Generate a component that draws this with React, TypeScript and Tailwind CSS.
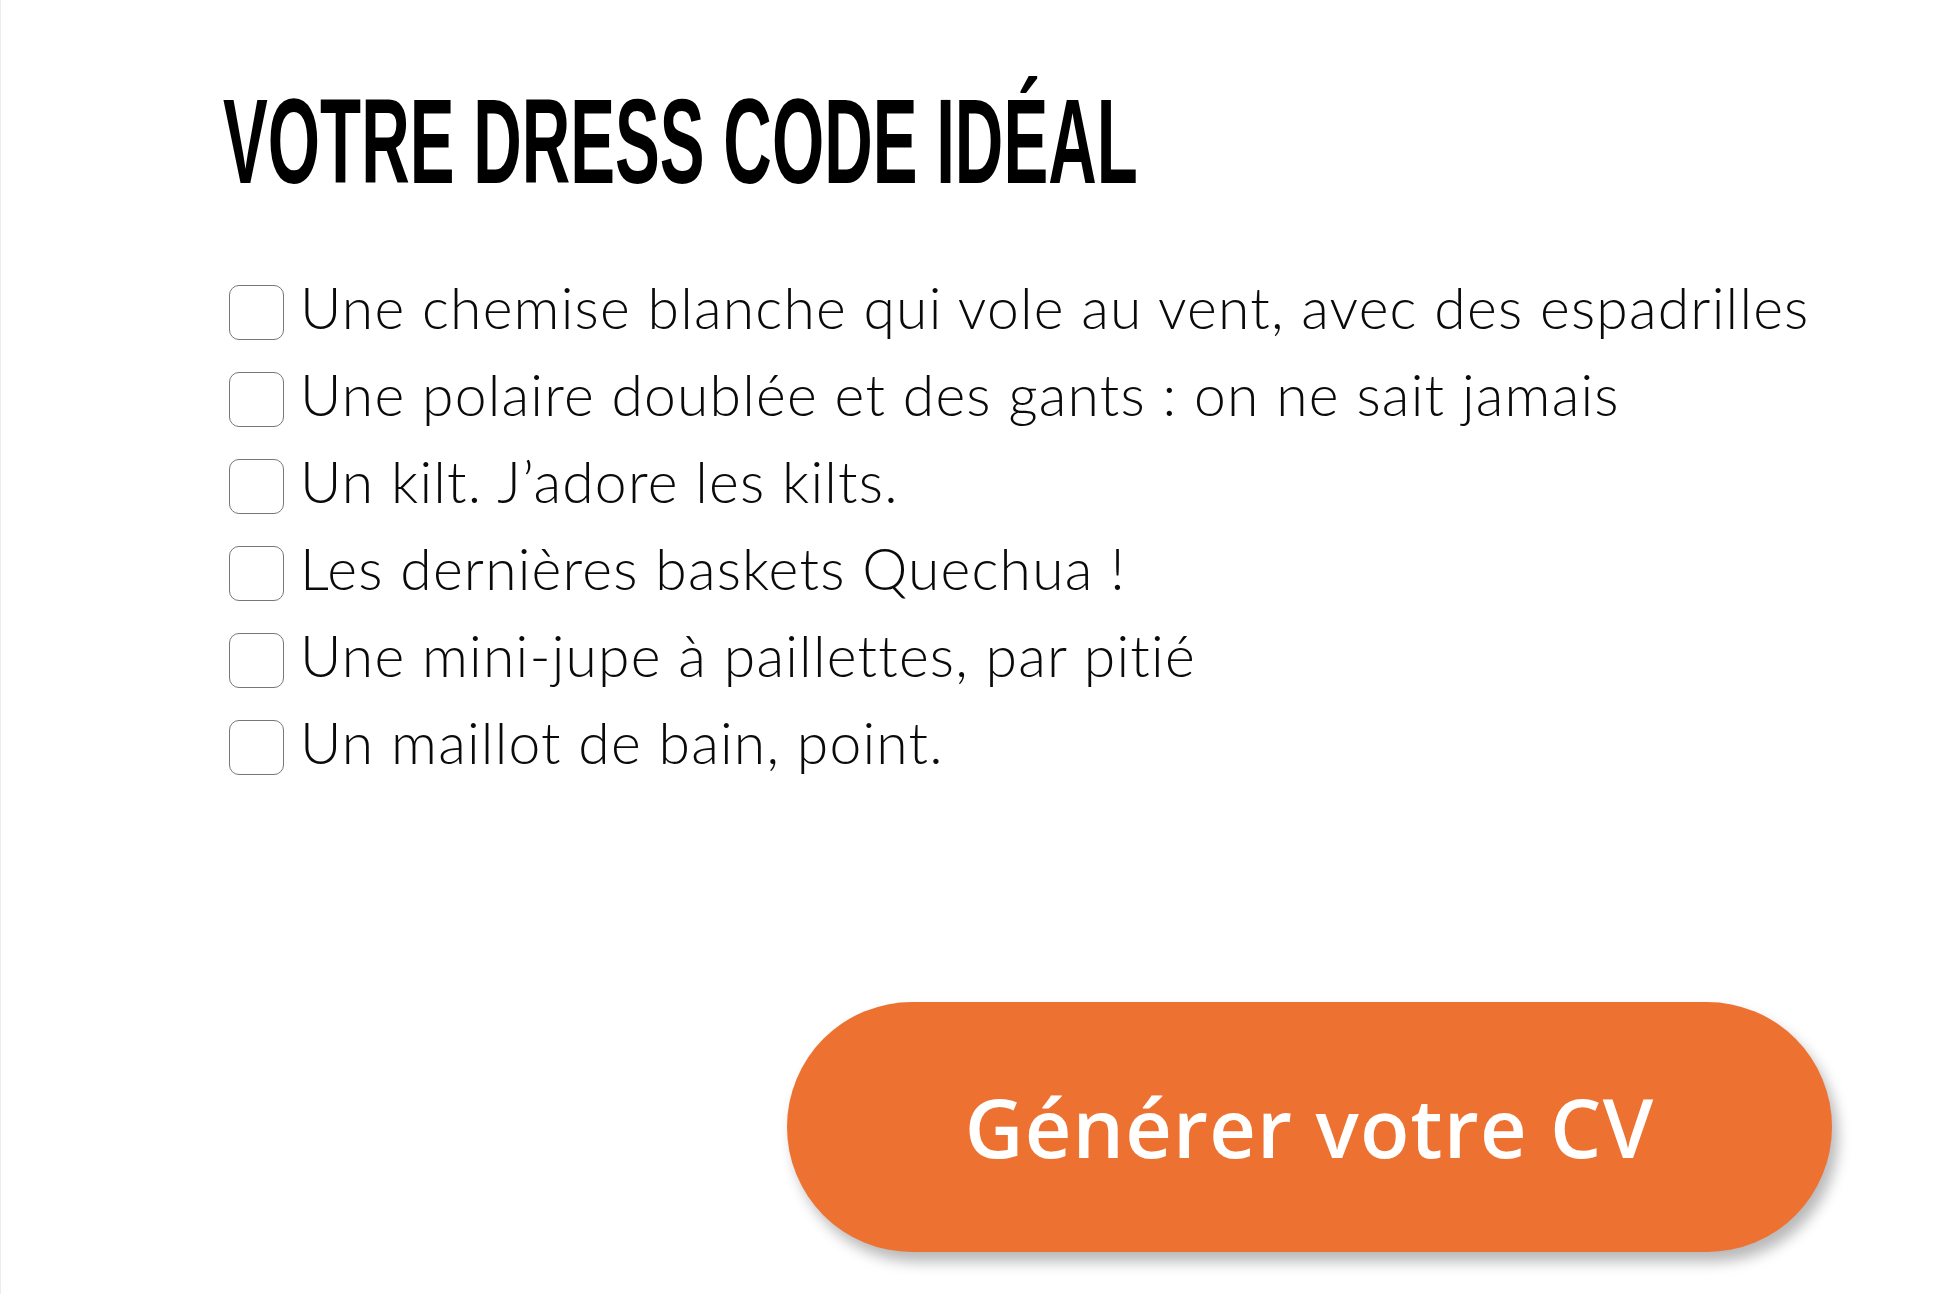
import React from 'react';

const options = [
  'Une chemise blanche qui vole au vent, avec des espadrilles',
  'Une polaire doublée et des gants : on ne sait jamais',
  'Un kilt. J’adore les kilts.',
  'Les dernières baskets Quechua !',
  'Une mini-jupe à paillettes, par pitié',
  'Un maillot de bain, point.',
];

export default function App() {
  return (
    <div className="min-h-screen bg-white border-l border-[#ececec]">
      <div className="pl-[222px] pr-[102px] pt-[81px] pb-10">
        {/* Heading */}
        <h2 className="origin-left scale-x-[0.56] whitespace-nowrap text-[120px] font-bold leading-none text-black font-['Liberation_Sans',sans-serif]">
          VOTRE DRESS CODE IDÉAL
        </h2>

        {/* Options */}
        <ul className="mt-[68px]">
          {options.map((label) => (
            <li key={label} className="flex h-[87px] items-center">
              <label className="flex cursor-pointer items-center gap-[16px] pl-[6px]">
                <span className="block h-[55px] w-[55px] shrink-0 rounded-[10px] border-[1.5px] border-[#777] bg-white" />
                <span className="whitespace-nowrap pb-[9px] text-[57px] font-light tracking-[1.2px] text-[#0a0a0a] font-['Lato',sans-serif]">
                  {label}
                </span>
              </label>
            </li>
          ))}
        </ul>

        {/* Submit */}
        <div className="mt-[211px] flex justify-end">
          <button className="flex h-[250px] w-[1045px] items-center justify-center rounded-full bg-[#ed7231] text-[81px] font-semibold tracking-[1.2px] text-white shadow-[6px_10px_14px_rgba(0,0,0,0.28)] font-['Open_Sans',sans-serif]">
            Générer votre CV
          </button>
        </div>
      </div>
    </div>
  );
}
